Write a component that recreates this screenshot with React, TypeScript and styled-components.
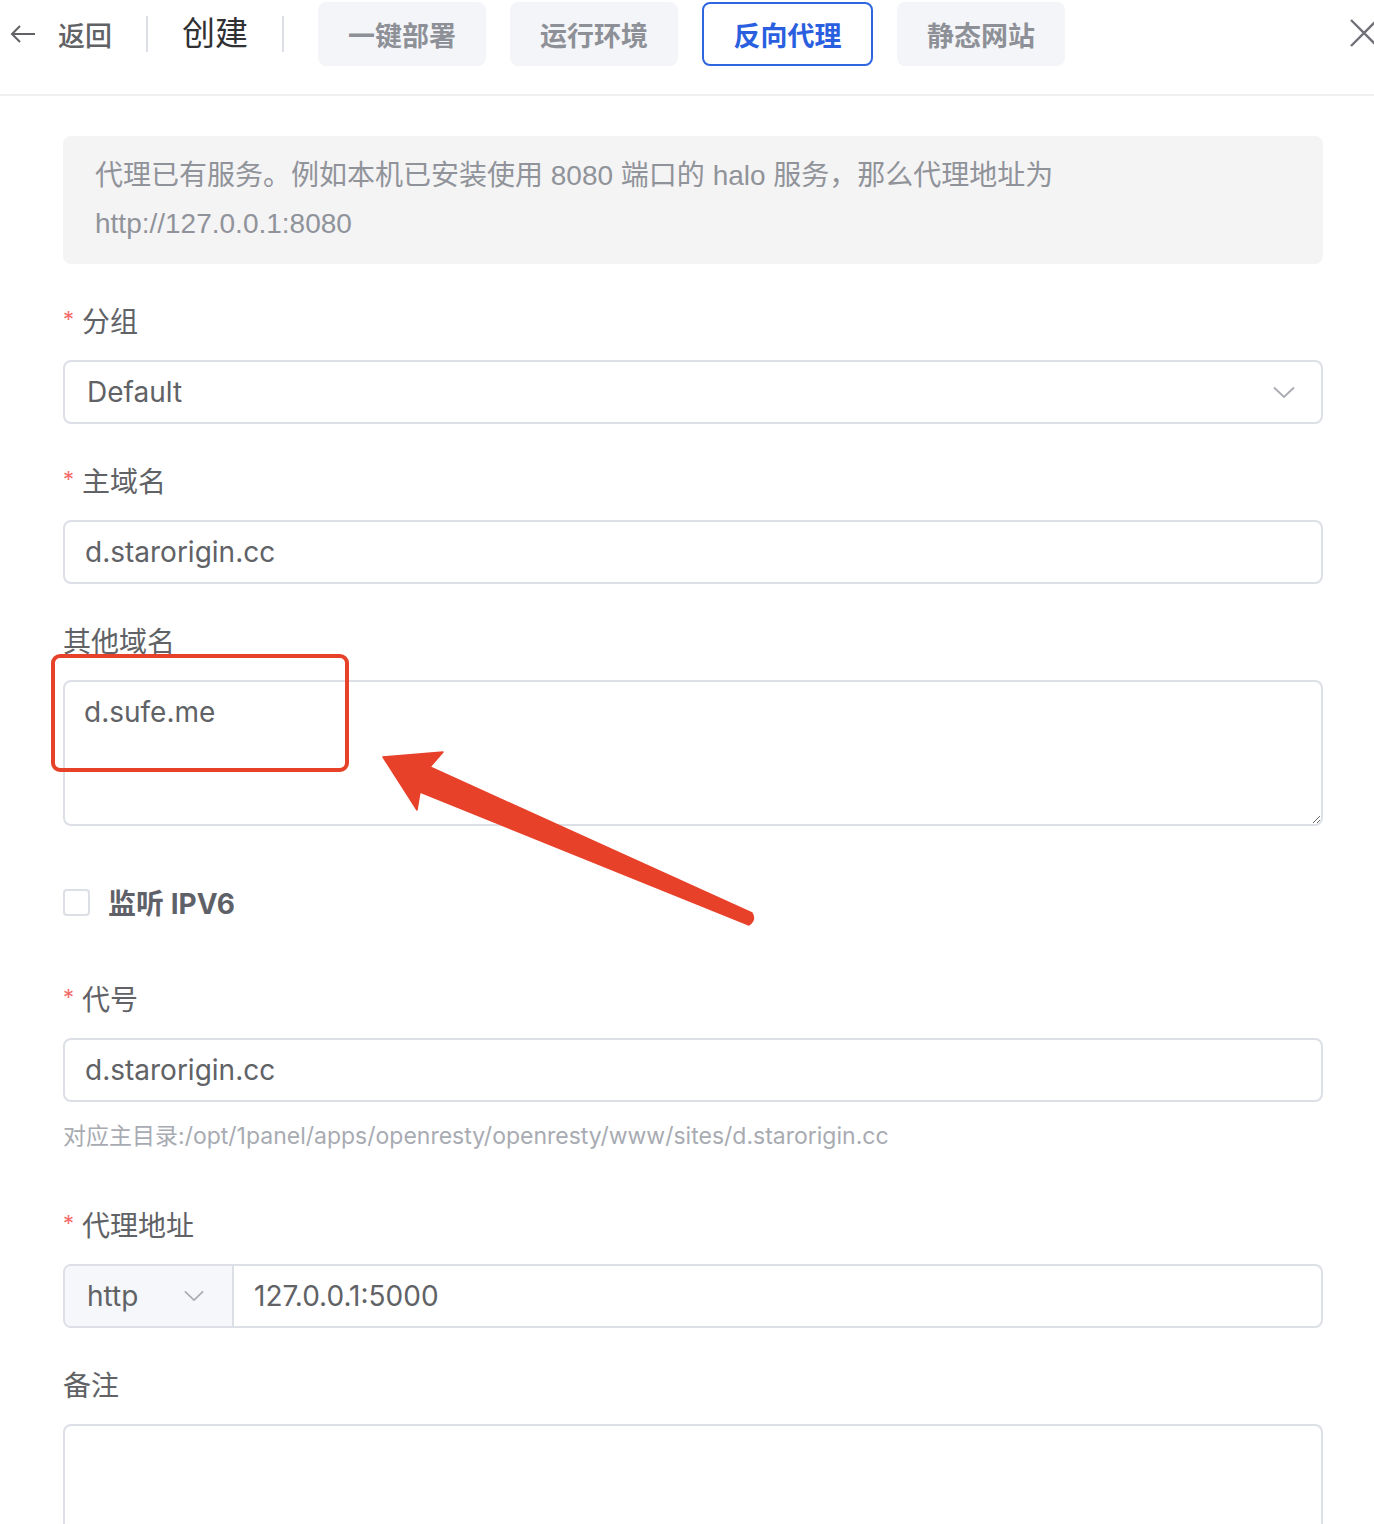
import React from "react";
import styled, { createGlobalStyle } from "styled-components";

const FONT = `Inter, "Liberation Sans", "Noto Sans CJK SC", sans-serif`;

const GlobalStyle = createGlobalStyle`
  html, body {
    margin: 0;
    padding: 0;
    overflow: hidden;
    background: #ffffff;
  }
  body {
    font-family: ${FONT};
    color: #606266;
  }
  * {
    box-sizing: border-box;
  }
`;

const Page = styled.div`
  position: relative;
  width: 1374px;
  height: 1524px;
  overflow: hidden;
`;

const Header = styled.div`
  display: flex;
  align-items: flex-start;
  height: 96px;
  padding: 2px 0 0 10px;
  border-bottom: 2px solid #f0f0f2;
`;

const HeaderRow = styled.div`
  display: flex;
  align-items: center;
  height: 64px;
  flex: 1;
`;

const BackButton = styled.div`
  display: flex;
  align-items: center;
  gap: 22px;
  font-size: 27px;
  font-weight: 500;
  color: #606266;
`;

const Divider = styled.div`
  width: 2px;
  height: 36px;
  background: #dcdfe6;
  margin: 0 34px;
`;

const Title = styled.div`
  font-size: 33px;
  color: #303133;
  margin-top: -6px;
`;

const Tabs = styled.div`
  display: flex;
  gap: 24px;
`;

const Tab = styled.div<{ active?: boolean }>`
  width: ${(p) => (p.active ? 171 : 168)}px;
  height: 64px;
  display: flex;
  align-items: center;
  justify-content: center;
  border-radius: 8px;
  font-size: 27px;
  font-weight: 700;
  background: ${(p) => (p.active ? "#ffffff" : "#f4f5f8")};
  color: ${(p) => (p.active ? "#2a5fe0" : "#8e9097")};
  border: 2px solid ${(p) => (p.active ? "#2f66e0" : "transparent")};
`;

const CloseButton = styled.div`
  margin-left: auto;
  margin-right: -12px;
  margin-top: -2px;
  display: flex;
`;

const Body = styled.div`
  padding: 40px 51px 0 63px;
  display: flex;
  flex-direction: column;
`;

const Alert = styled.div`
  background: #f4f4f5;
  border-radius: 8px;
  padding: 16px 32px;
  font-family: "Liberation Sans", "Noto Sans CJK SC", sans-serif;
  font-size: 28px;
  line-height: 48px;
  color: #909399;
  margin-bottom: 34px;
`;

const FormItem = styled.div<{ gap?: number }>`
  display: flex;
  flex-direction: column;
  margin-bottom: ${(p) => p.gap ?? 34}px;
`;

const Label = styled.div`
  height: 48px;
  line-height: 48px;
  font-size: 28px;
  color: #606266;
  margin-bottom: 14px;
  display: flex;
  align-items: center;
`;

const Star = styled.span`
  color: #f56c6c;
  font-size: 22px;
  margin-right: 8px;
  margin-top: -6px;
`;

const Field = styled.div`
  height: 64px;
  border: 2px solid #dcdfe6;
  border-radius: 8px;
  display: flex;
  align-items: center;
  padding: 0 20px;
  font-size: 28px;
  color: #606266;
  background: #ffffff;
`;

const SelectField = styled(Field)`
  justify-content: space-between;
  padding: 0 26px 0 22px;
`;

const TextArea = styled.textarea`
  display: block;
  height: 146px;
  border: 2px solid #dcdfe6;
  border-radius: 8px;
  padding: 10px 19px;
  font-family: ${FONT};
  font-size: 28px;
  line-height: 40px;
  color: #606266;
  outline: none;
  resize: vertical;
  width: 100%;
`;

const CheckRow = styled.div`
  display: flex;
  align-items: center;
  gap: 18px;
  height: 64px;
  margin-top: 44px;
  margin-bottom: 42px;
`;

const CheckBox = styled.div`
  width: 27px;
  height: 27px;
  border: 2px solid #dcdfe6;
  border-radius: 4px;
  background: #fff;
`;

const CheckLabel = styled.div`
  font-size: 28px;
  font-weight: 700;
  color: #5f6168;
`;

const Help = styled.div`
  font-size: 23px;
  line-height: 40px;
  color: #a8abb2;
  margin-top: 14px;
`;

const Group = styled.div`
  display: flex;
  height: 64px;
  border: 2px solid #dcdfe6;
  border-radius: 8px;
  overflow: hidden;
`;

const Prefix = styled.div`
  width: 169px;
  background: #f5f7fa;
  border-right: 2px solid #dcdfe6;
  display: flex;
  align-items: center;
  justify-content: space-between;
  padding: 0 28px 0 22px;
  font-size: 28px;
  color: #606266;
`;

const GroupInput = styled.div`
  flex: 1;
  display: flex;
  align-items: center;
  padding-left: 20px;
  font-size: 28px;
  color: #606266;
`;

const Highlight = styled.div`
  position: absolute;
  left: 51px;
  top: 654px;
  width: 298px;
  height: 118px;
  border: 4px solid #e8412a;
  border-radius: 9px;
  pointer-events: none;
`;

const ArrowLayer = styled.svg`
  position: absolute;
  left: 0;
  top: 0;
  pointer-events: none;
`;

const Chevron = ({ size = 22 }: { size?: number }) => (
  <svg width={size} height={size / 2 + 2} viewBox="0 0 22 13" fill="none">
    <path d="M1 1.5 L11 11 L21 1.5" stroke="#a8abb2" strokeWidth="1.8" />
  </svg>
);

export default function App() {
  return (
    <Page>
      <GlobalStyle />
      <Header>
        <HeaderRow>
          <BackButton>
            <svg width="26" height="20" viewBox="0 0 26 20" fill="none">
              <path d="M25 10 H2 M10 2 L2 10 L10 18" stroke="#606266" strokeWidth="2" />
            </svg>
            <span>返回</span>
          </BackButton>
          <Divider />
          <Title>创建</Title>
          <Divider />
          <Tabs>
            <Tab>一键部署</Tab>
            <Tab>运行环境</Tab>
            <Tab active>反向代理</Tab>
            <Tab>静态网站</Tab>
          </Tabs>
          <CloseButton>
            <svg width="36" height="28" viewBox="0 0 36 28" fill="none">
              <path d="M1 1 L27 27 M27 1 L1 27" stroke="#707277" strokeWidth="2.4" />
            </svg>
          </CloseButton>
        </HeaderRow>
      </Header>

      <Body>
        <Alert>
          代理已有服务。例如本机已安装使用 8080 端口的 halo 服务，那么代理地址为
          <br />
          http://127.0.0.1:8080
        </Alert>

        <FormItem>
          <Label>
            <Star>*</Star>分组
          </Label>
          <SelectField>
            <span>Default</span>
            <Chevron />
          </SelectField>
        </FormItem>

        <FormItem>
          <Label>
            <Star>*</Star>主域名
          </Label>
          <Field>d.starorigin.cc</Field>
        </FormItem>

        <FormItem gap={0}>
          <Label>其他域名</Label>
          <TextArea readOnly value="d.sufe.me" />
        </FormItem>

        <CheckRow>
          <CheckBox />
          <CheckLabel>监听 IPV6</CheckLabel>
        </CheckRow>

        <FormItem gap={46}>
          <Label>
            <Star>*</Star>代号
          </Label>
          <Field>d.starorigin.cc</Field>
          <Help>对应主目录:/opt/1panel/apps/openresty/openresty/www/sites/d.starorigin.cc</Help>
        </FormItem>

        <FormItem>
          <Label>
            <Star>*</Star>代理地址
          </Label>
          <Group>
            <Prefix>
              <span>http</span>
              <Chevron size={20} />
            </Prefix>
            <GroupInput>127.0.0.1:5000</GroupInput>
          </Group>
        </FormItem>

        <FormItem>
          <Label>备注</Label>
          <TextArea readOnly value="" />
        </FormItem>
      </Body>

      <Highlight />
      <ArrowLayer width="1374" height="1524" viewBox="0 0 1374 1524">
        <path
          d="M383 757 L443 752 L430 767 L752 913 Q756 920 749 925 L420 792 L417 810 Z"
          fill="#e8412a"
          stroke="#e8412a"
          strokeWidth="1.5"
          strokeLinejoin="round"
        />
      </ArrowLayer>
    </Page>
  );
}
